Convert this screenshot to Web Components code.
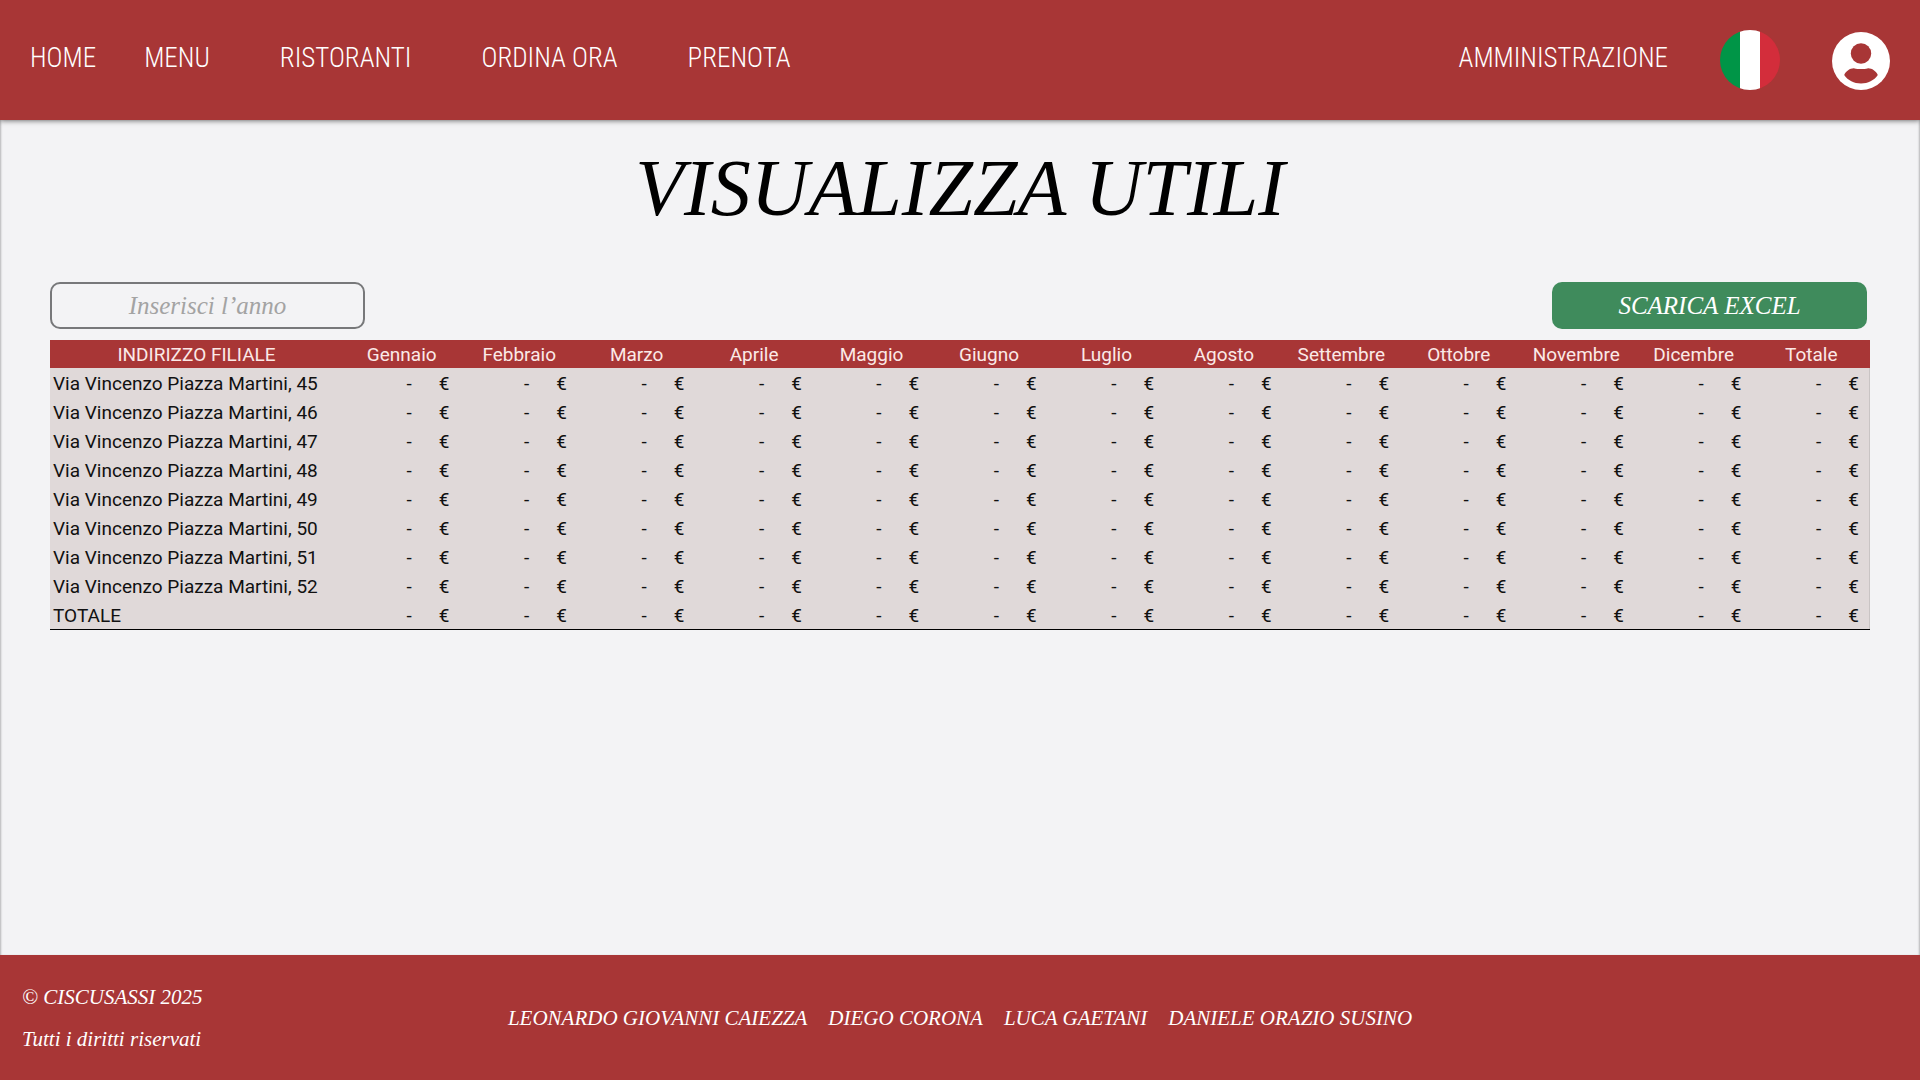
<!DOCTYPE html>
<html lang="it">
<head>
<meta charset="utf-8">
<title>Visualizza utili</title>
<style>
  body {
    margin: 0;
    --brand: #a83636;
    --surface: #f3f3f5;
    --script: "Liberation Serif", serif;
    --sans: Roboto, sans-serif;
    background: var(--surface);
  }
</style>
</head>
<body>
<app-shell>
  <app-header slot="header"></app-header>
  <page-title>VISUALIZZA UTILI</page-title>
  <year-toolbar></year-toolbar>
  <profit-table></profit-table>
  <app-footer slot="footer"></app-footer>
</app-shell>

<script>
const define = (name, html, setup) => {
  const template = document.createElement('template');
  template.innerHTML = html;
  customElements.define(name, class extends HTMLElement {
    constructor() {
      super();
      this.attachShadow({ mode: 'open' }).append(template.content.cloneNode(true));
      if (setup) setup(this.shadowRoot);
    }
  });
};

define('app-shell', `
  <style>
    :host { display: flex; flex-direction: column; min-height: 100vh; background: var(--surface); }
    main { flex: 1; padding: 16px 50px 24px; box-shadow: inset 2px 0 2px -1px rgba(0,0,0,.25), inset -2px 0 2px -1px rgba(0,0,0,.25); }
  </style>
  <slot name="header"></slot>
  <main><slot></slot></main>
  <slot name="footer"></slot>`);

define('nav-link', `
  <style>
    :host { display: block; }
    a { color: #fff; text-decoration: none; font: 300 27px/32px "Roboto Condensed", Roboto, sans-serif; white-space: nowrap; }
  </style>
  <a href="#"><slot></slot></a>`);

define('flag-button', `
  <style>
    :host { display: block; }
    button { display: block; border: 0; padding: 0; background: none; border-radius: 50%; overflow: hidden; }
    svg { display: block; }
  </style>
  <button aria-label="Italiano">
    <svg width="60" height="60" viewBox="0 0 60 60">
      <path fill="#009547" d="M0 0h20v60H0z"/><path fill="#fff" d="M20 0h20v60H20z"/><path fill="#d32d3b" d="M40 0h20v60H40z"/>
    </svg>
  </button>`);

define('account-button', `
  <style>
    :host { display: block; padding-top: 2px; }
    button { display: block; border: 0; padding: 0; background: none; }
    svg { display: block; }
  </style>
  <button aria-label="Account">
    <svg width="58" height="58" viewBox="0 0 58 58">
      <circle cx="29" cy="29" r="29" fill="#fff"/>
      <circle cx="29" cy="21.5" r="10.2" fill="#a83636"/>
      <path fill="#a83636" d="M12.2 43C14 39 18.500 36 22.500 36.400C25.500 37.300 32.500 37.300 35.500 36.400C39.500 36 44 39 45.800 43C42 48.500 36 51.500 29 51.500C22 51.500 16 48.500 12.200 43Z"/>
    </svg>
  </button>`);

define('app-header', `
  <style>
    :host { display: flex; align-items: center; justify-content: space-between; box-sizing: border-box; height: 120px; padding: 0 30px; background: var(--brand); box-shadow: 0 1px 5px rgba(0,0,0,.5); position: relative; }
    nav, .tools { display: flex; align-items: center; }
    nav { gap: 70px; }
    .main { display: flex; gap: 48px; }
    nav, .admin { padding-bottom: 4px; }
    .tools { gap: 52px; }
  </style>
  <nav>
    <div class="main"><nav-link>HOME</nav-link><nav-link>MENU</nav-link></div>
    <nav-link>RISTORANTI</nav-link><nav-link>ORDINA ORA</nav-link><nav-link>PRENOTA</nav-link>
  </nav>
  <div class="tools">
    <nav-link class="admin">AMMINISTRAZIONE</nav-link>
    <flag-button></flag-button>
    <account-button></account-button>
  </div>`);

define('page-title', `
  <style>
    :host { display: block; }
    h1 { margin: 0; padding: 4px 0 46px; text-align: center; font: italic 80px/96px var(--script); color: #000; }
  </style>
  <h1><slot></slot></h1>`);

define('year-toolbar', `
  <style>
    :host { display: flex; justify-content: space-between; padding-right: 3px; margin-bottom: 11px; }
    input, button { box-sizing: border-box; width: 315px; height: 47px; border-radius: 10px; font: italic 25px/32px var(--script); text-align: center; }
    input { border: 2px solid #77787a; background: transparent; color: #222; }
    input::placeholder { color: #a3a3a3; opacity: 1; }
    button { border: 0; background: #3f8b5c; color: #fff; }
  </style>
  <input type="text" aria-label="Anno" placeholder="Inserisci l’anno">
  <button>SCARICA EXCEL</button>`);

define('profit-table', `
  <style>
    :host { display: block; }
    table { width: 100%; table-layout: fixed; border-collapse: separate; border-spacing: 0; background: #e0d9d9; color: #111; font: 19px/27px var(--sans); border-bottom: 1px solid #000; box-shadow: inset -1px 0 #c9c4c4; }
    th, td { box-sizing: border-box; padding: 2px 0 0; height: 29px; font-weight: 400; white-space: nowrap; }
    thead th { height: 28px; line-height: 26px; background: var(--brand); color: #fbe9e7; text-align: center; }
    col.place { width: 16.1%; }
    tbody th { text-align: left; padding-left: 3px; }
    td span { display: flex; justify-content: flex-end; gap: 27px; padding-right: 11px; }
    i { font-style: normal; }
  </style>
  <table>
    <colgroup><col class="place"><col span="13"></colgroup>
    <thead><tr></tr></thead>
    <tbody></tbody>
  </table>`, root => {
  const heads = ['INDIRIZZO FILIALE', 'Gennaio', 'Febbraio', 'Marzo', 'Aprile', 'Maggio', 'Giugno', 'Luglio', 'Agosto', 'Settembre', 'Ottobre', 'Novembre', 'Dicembre', 'Totale'];
  const rows = [45, 46, 47, 48, 49, 50, 51, 52].map(n => `Via Vincenzo Piazza Martini, ${n}`).concat('TOTALE');
  root.querySelector('thead tr').innerHTML = heads.map(h => `<th scope="col">${h}</th>`).join('');
  root.querySelector('tbody').innerHTML = rows.map(r =>
    `<tr><th scope="row">${r}</th>${'<td><span><i>-</i><i>€</i></span></td>'.repeat(13)}</tr>`).join('');
});

define('app-footer', `
  <style>
    :host { display: grid; grid-template-columns: 1fr auto 1fr; align-items: center; box-sizing: border-box; height: 125px; padding: 0 22px; background: var(--brand); color: #fff; font: italic 21px/24px var(--script); position: relative; }
    p { margin: 0; }
    .legal { display: grid; gap: 18px; }
    .authors { display: flex; gap: 21px; }
  </style>
  <div class="legal"><p>© CISCUSASSI 2025</p><p>Tutti i diritti riservati</p></div>
  <div class="authors"><span>LEONARDO GIOVANNI CAIEZZA</span><span>DIEGO CORONA</span><span>LUCA GAETANI</span><span>DANIELE ORAZIO SUSINO</span></div>`);
</script>
</body>
</html>
